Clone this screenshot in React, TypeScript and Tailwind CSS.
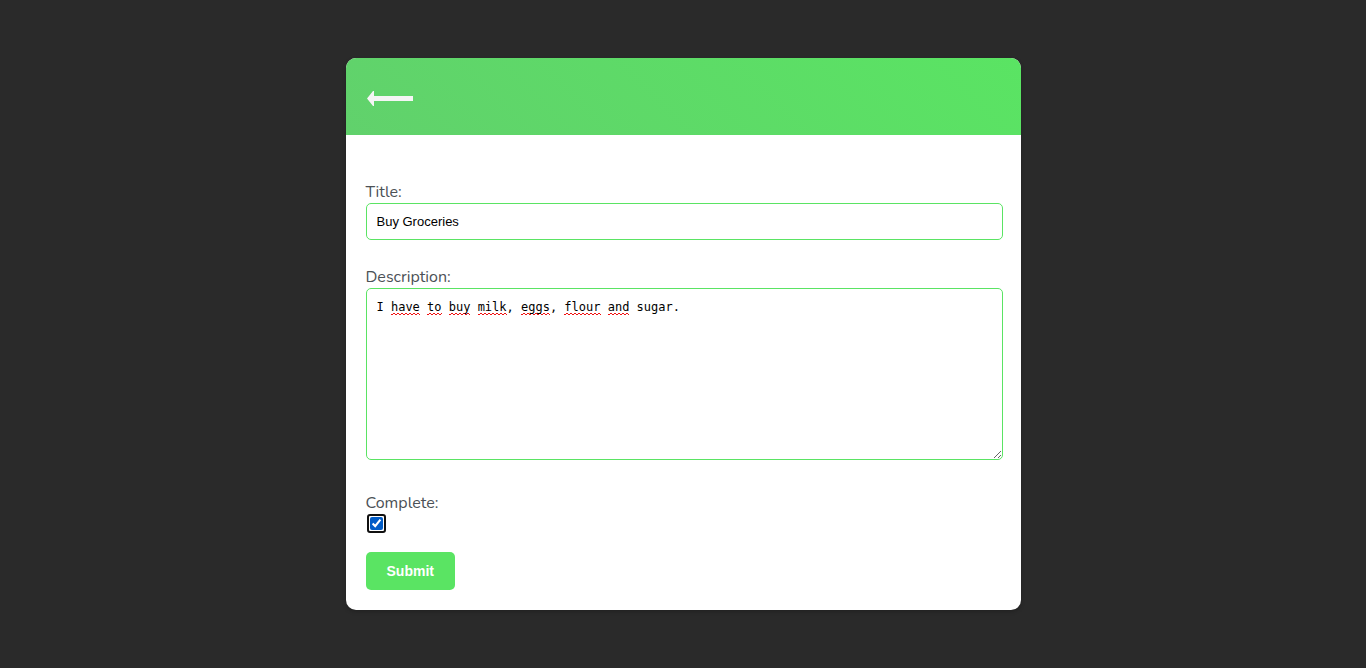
import { useState } from "react";

const flagged = new Set(["have", "to", "buy", "milk", "eggs", "flour", "and"]);

function SpellingMarks({ text }: { text: string }) {
  return (
    <div
      aria-hidden="true"
      className="pointer-events-none absolute inset-0 overflow-hidden whitespace-pre-wrap border border-transparent p-2.5 font-['DejaVu_Sans_Mono',monospace] text-[12px] leading-4 text-transparent"
    >
      {text.split(/(\w+)/).map((part, i) =>
        flagged.has(part) ? (
          <span
            key={i}
            className="bg-[linear-gradient(90deg,#f01010_50%,transparent_50%),linear-gradient(90deg,#f01010_50%,transparent_50%)] bg-[length:4px_1px] bg-[position:0_100%,2px_calc(100%_-_1px)] bg-repeat-x pb-px"
          >
            {part}
          </span>
        ) : (
          part
        ),
      )}
    </div>
  );
}

export default function App() {
  const [title, setTitle] = useState("Buy Groceries");
  const [description, setDescription] = useState(
    "I have to buy milk, eggs, flour and sugar.",
  );
  const [complete, setComplete] = useState(true);

  return (
    <main className="flex min-h-screen items-center justify-center bg-[#2a2a2a] font-[Nunito,Lato,sans-serif] text-base text-[#4b5156]">
      <div className="w-full max-w-[675px] overflow-hidden rounded-[10px] bg-white shadow-[0_2px_4px_rgba(0,0,0,0.2)]">
        <header className="flex bg-[linear-gradient(45deg,#61d16c,#5ae463)] px-5 pt-8 pb-[29px]">
          <a href="#back" aria-label="Back" className="flex">
            <svg width="48" height="16" viewBox="0 0 48 16" fill="#f5f5f5">
              <path d="M1 8.5 7 1H8V6H47V11H8V16H7Z" />
            </svg>
          </a>
        </header>
        <form
          className="flex flex-col items-start pt-[46px] pr-[18px] pb-5 pl-5"
          onSubmit={(e) => e.preventDefault()}
        >
          <label htmlFor="title" className="leading-[22px]">
            Title:
          </label>
          <input
            id="title"
            type="text"
            value={title}
            onChange={(e) => setTitle(e.target.value)}
            className="mb-[26px] w-full rounded-[5px] border border-[#5ae463] p-2.5 font-['Liberation_Sans',sans-serif] text-[13px] leading-[15px] text-black outline-none"
          />
          <label htmlFor="description" className="leading-[22px]">
            Description:
          </label>
          <div className="relative mb-8 flex w-full">
            <SpellingMarks text={description} />
            <textarea
              id="description"
              spellCheck={false}
              value={description}
              onChange={(e) => setDescription(e.target.value)}
              className="relative h-[172px] w-full resize rounded-[5px] border border-[#5ae463] bg-transparent p-2.5 font-['DejaVu_Sans_Mono',monospace] text-[12px] leading-4 text-black outline-none"
            />
          </div>
          <label htmlFor="complete" className="leading-[22px]">
            Complete:
          </label>
          <span className="mx-px mb-[19px] flex rounded-[3px] border-2 border-[#101010] p-px">
            <input
              id="complete"
              type="checkbox"
              checked={complete}
              onChange={(e) => setComplete(e.target.checked)}
              className="size-[13px] accent-[#005cc8] outline-none"
            />
          </span>
          <button
            type="submit"
            className="rounded-[5px] bg-[#5ae463] px-[21px] py-2.5 font-['Liberation_Sans',sans-serif] text-sm leading-[18px] font-bold text-white"
          >
            Submit
          </button>
        </form>
      </div>
    </main>
  );
}
